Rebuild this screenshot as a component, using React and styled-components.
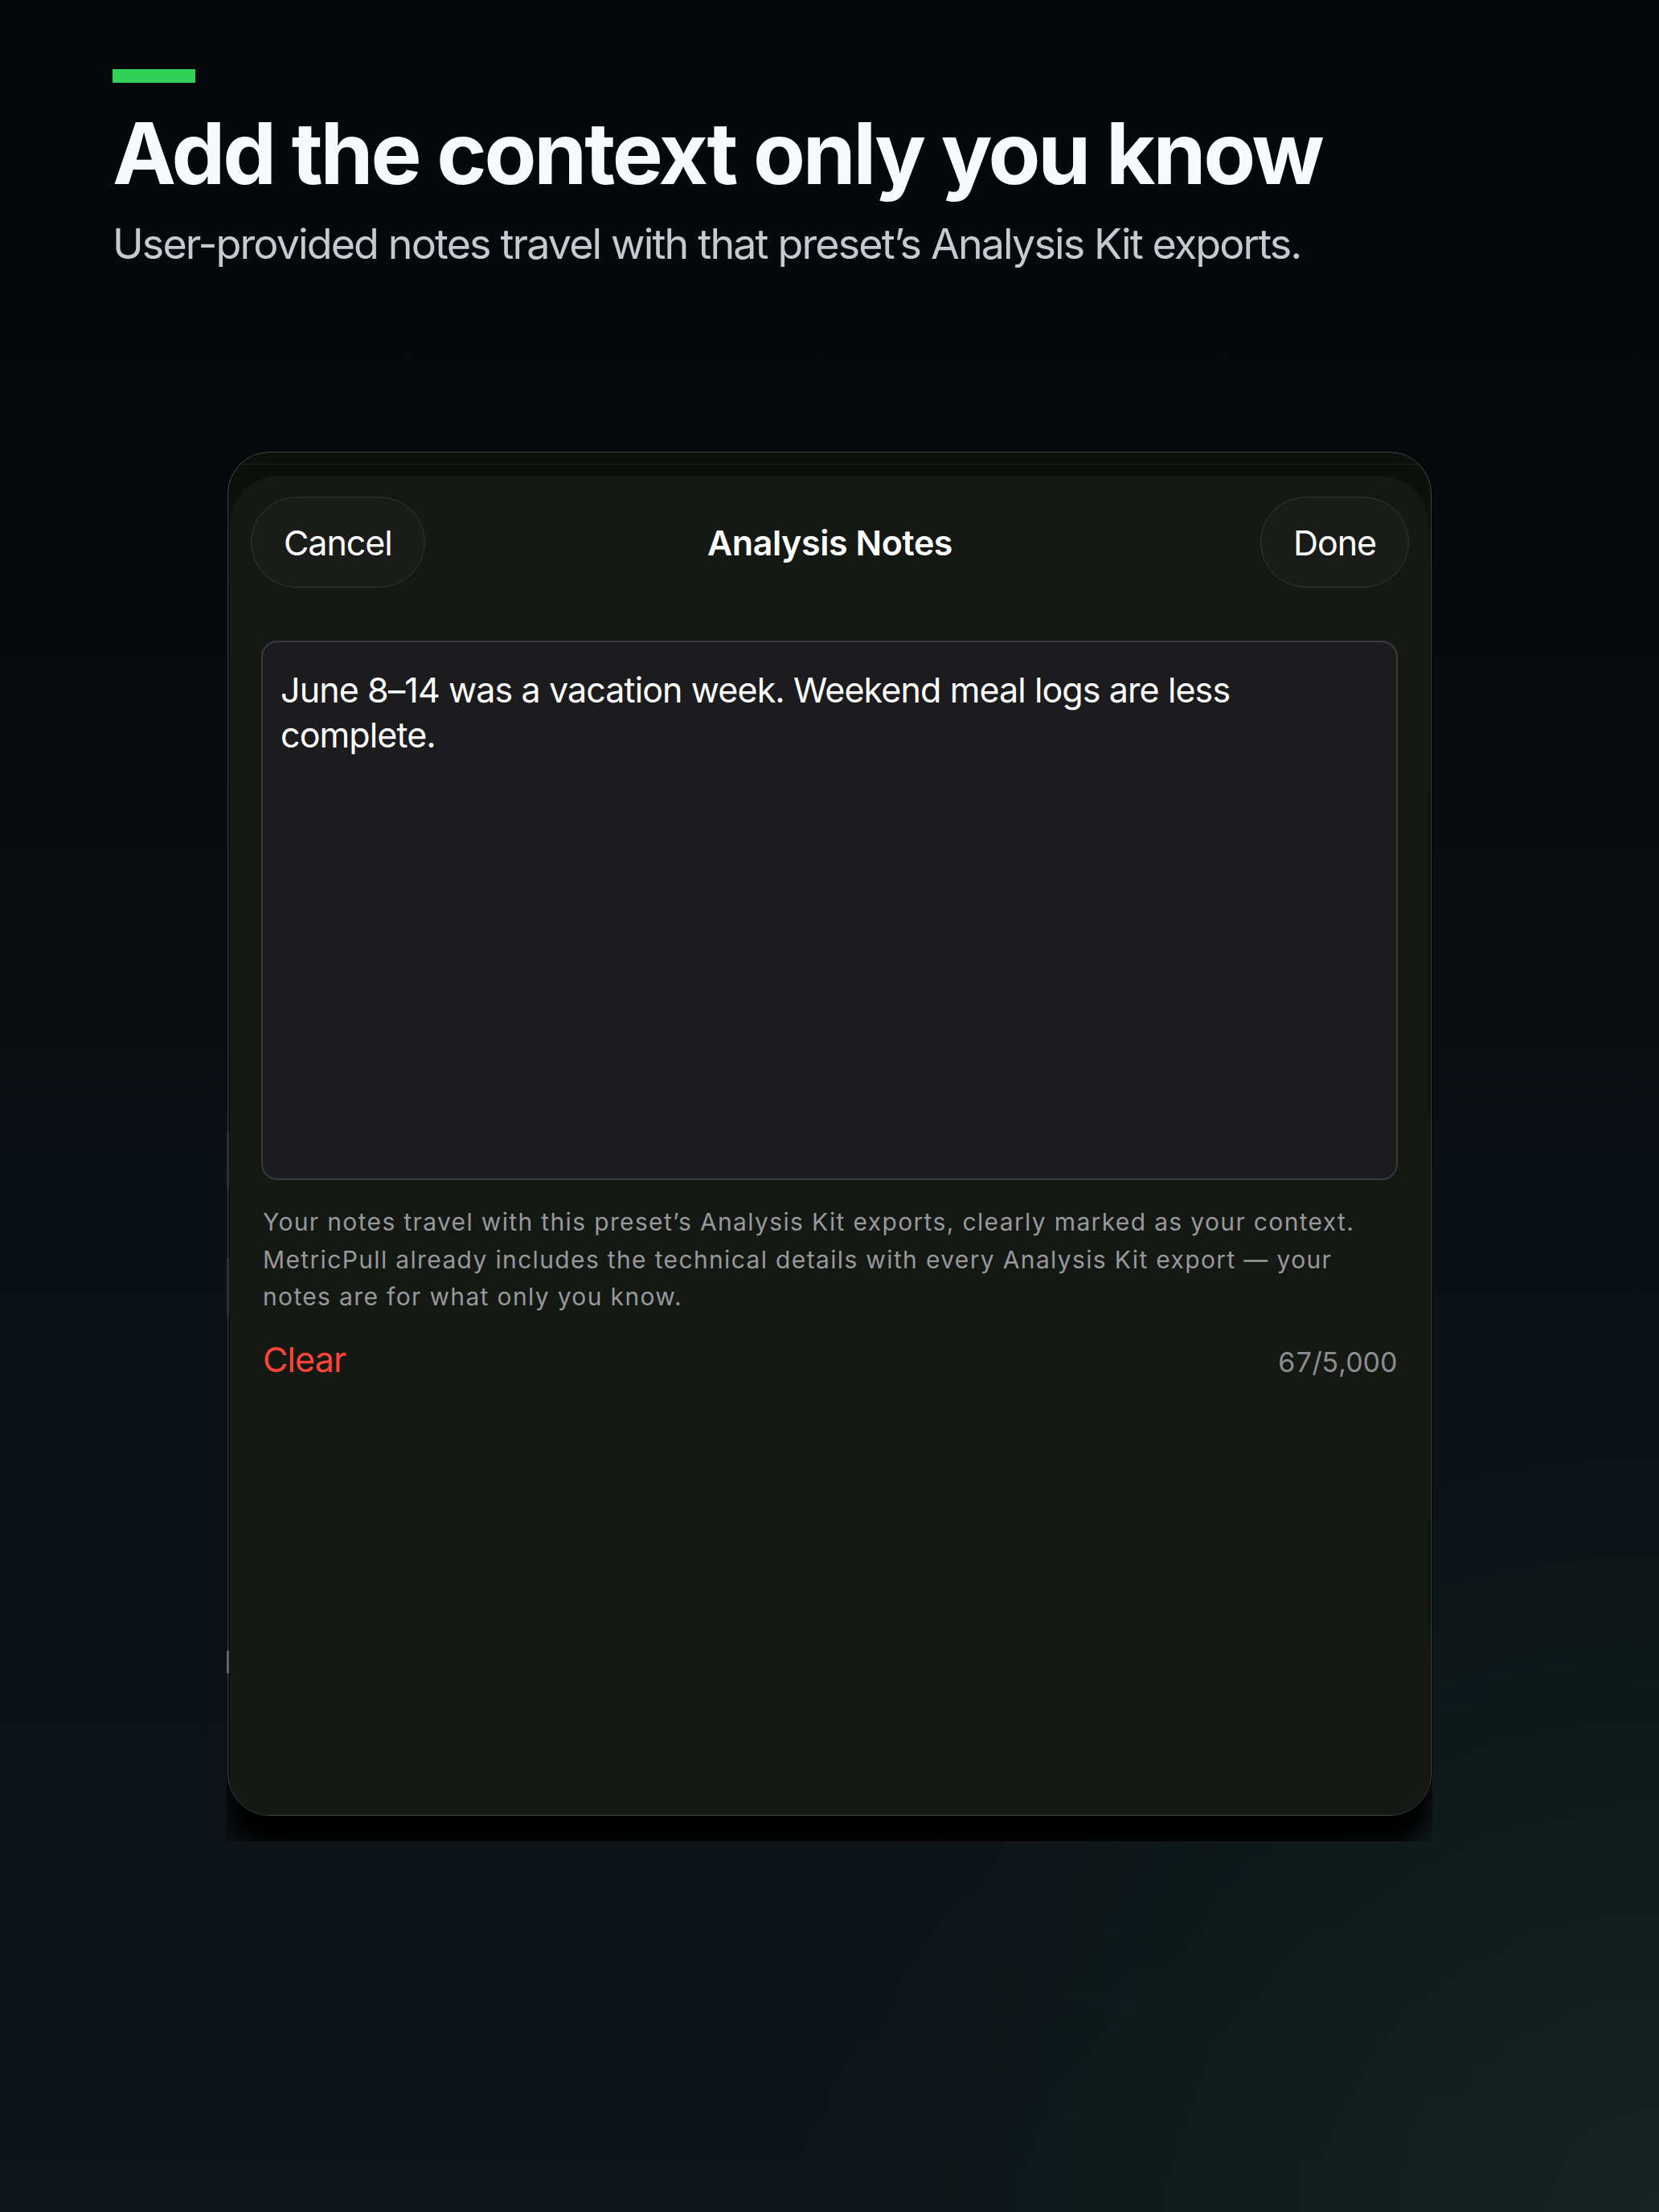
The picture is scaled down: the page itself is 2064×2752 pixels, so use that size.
import React, { useState } from 'react';
import styled, { createGlobalStyle } from 'styled-components';

const GlobalStyle = createGlobalStyle`
    * { box-sizing: border-box; }
    html, body {
        margin: 0;
        padding: 0;
    }
    body {
        width: 2064px;
        min-height: 2752px;
        font-family: Inter, "Noto Sans", "Liberation Sans", sans-serif;
        color: #fff;
        background:
            radial-gradient(ellipse 1500px 1400px at 100% 100%, rgba(24, 50, 42, 0.55), rgba(24, 50, 42, 0) 72%),
            linear-gradient(180deg, #05070a 0%, #070a0d 25%, #0b1014 55%, #0e1418 100%);
    }
`;

const Page = styled.main`
    min-height: 2752px;
    padding: 86px 0 0 140px;
    display: flex;
    flex-direction: column;
`;

const AccentBar = styled.div`
    width: 103px;
    height: 17px;
    background: #30d158;
    margin-bottom: 35px;
`;

const Headline = styled.h1`
    margin: 0;
    font-size: 106px;
    line-height: 1;
    font-weight: 700;
    letter-spacing: -0.03em;
    color: #f8f9fb;
`;

const Subtitle = styled.p`
    margin: 34px 0 0;
    font-size: 52px;
    line-height: 1;
    font-weight: 400;
    letter-spacing: -0.036em;
    color: #c6cad0;
`;

const DeviceClip = styled.div`
    position: relative;
    align-self: center;
    margin: 232px 0 0 -140px;
    width: 1500px;
    height: 1729px;
    overflow: hidden;
`;

const SideKey = styled.span`
    position: absolute;
    left: 0;
    top: ${p => p.top}px;
    width: 3px;
    height: ${p => p.len}px;
    border-radius: 2px;
    background: ${p => (p.bright ? '#5f6468' : '#2b3137')};
`;

const Frame = styled.section`
    height: 1697px;
    margin: 0 1px;
    border: 1.5px solid #3d444b;
    border-radius: 52px;
    background: #0d100c;
    display: flex;
    flex-direction: column;
    overflow: hidden;
    box-shadow: 0 40px 30px #000;
`;

const StatusStrip = styled.div`
    height: 15px;
    margin-bottom: 14px;
    border-bottom: 1px solid #1b201a;
`;

const Sheet = styled.div`
    flex: 1;
    margin: 0 2px;
    padding: 26px 25px 0 26px;
    background: #151914;
    border-radius: 62px 62px 0 0;
    display: flex;
    flex-direction: column;
`;

const Header = styled.header`
    display: grid;
    grid-template-columns: 1fr auto 1fr;
    align-items: center;
`;

const Pill = styled.button`
    justify-self: ${p => p.side};
    height: 113px;
    padding: 0 40px;
    border-radius: 57px;
    border: 1.5px solid #333930;
    background: #1a1c19;
    color: #fff;
    font-family: inherit;
    font-size: 43px;
    font-weight: 400;
    letter-spacing: -0.025em;
    cursor: pointer;
`;

const Title = styled.h2`
    margin: 0;
    font-size: 43px;
    font-weight: 600;
    letter-spacing: -0.01em;
    color: #fff;
`;

const Body = styled.div`
    padding: 66px 14px 0 13px;
    display: flex;
    flex-direction: column;
`;

const NoteField = styled.textarea`
    display: block;
    width: 100%;
    height: 671px;
    resize: none;
    margin: 0;
    padding: 31px 22px;
    border: 2px solid #3a3a3c;
    border-radius: 20px;
    background: #1c1c1e;
    color: #fff;
    font-family: Inter, "Noto Sans", "Liberation Sans", sans-serif;
    font-size: 43px;
    line-height: 56px;
    letter-spacing: -0.021em;
    outline: none;
`;

const Footnote = styled.p`
    margin: 29px 0 0;
    padding: 0 2px;
    font-size: 30px;
    line-height: 46.5px;
    letter-spacing: 1.35px;
    color: #98989d;
`;

const ActionRow = styled.div`
    margin-top: 28px;
    display: flex;
    justify-content: space-between;
    align-items: baseline;
    padding: 0 1px 0 2px;
`;

const ClearButton = styled.button`
    padding: 0;
    border: none;
    background: none;
    font-family: inherit;
    font-size: 43px;
    line-height: 52px;
    letter-spacing: -0.02em;
    color: #ff453a;
    cursor: pointer;
`;

const Counter = styled.span`
    font-size: 34px;
    letter-spacing: -0.02em;
    color: #8d8d92;
    font-variant-numeric: tabular-nums;
`;

const LIMIT = 5000;

export default function App() {
    const [note, setNote] = useState('June 8\u201314 was a vacation week. Weekend meal logs are less complete.');

    return (
        <>
            <GlobalStyle />
            <Page>
                <AccentBar />
                <Headline>Add the context only you know</Headline>
                <Subtitle>User-provided notes travel with that preset’s Analysis Kit exports.</Subtitle>

                <DeviceClip>
                    <SideKey top={846} len={72} />
                    <SideKey top={1003} len={72} />
                    <SideKey top={1491} len={29} bright />
                    <Frame>
                        <StatusStrip />
                        <Sheet>
                            <Header>
                                <Pill side="start">Cancel</Pill>
                                <Title>Analysis Notes</Title>
                                <Pill side="end">Done</Pill>
                            </Header>
                            <Body>
                                <NoteField
                                    value={note}
                                    maxLength={LIMIT}
                                    onChange={e => setNote(e.target.value)}
                                />
                                <Footnote>
                                    Your notes travel with this preset’s Analysis Kit exports, clearly marked as your context.
                                    MetricPull already includes the technical details with every Analysis Kit export — your
                                    notes are for what only you know.
                                </Footnote>
                                <ActionRow>
                                    <ClearButton onClick={() => setNote('')}>Clear</ClearButton>
                                    <Counter>{note.length}/{LIMIT.toLocaleString('en-US')}</Counter>
                                </ActionRow>
                            </Body>
                        </Sheet>
                    </Frame>
                </DeviceClip>
            </Page>
        </>
    );
}
